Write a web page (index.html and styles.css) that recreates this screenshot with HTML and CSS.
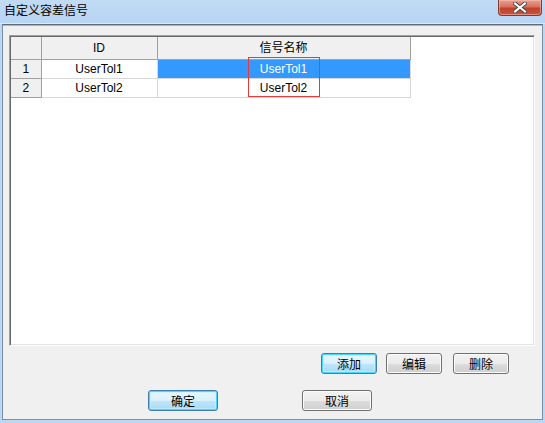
FILE: index.html
```html
<!DOCTYPE html>
<html lang="zh">
<head>
<meta charset="utf-8">
<title>自定义容差信号</title>
<link rel="stylesheet" href="styles.css">
</head>
<body>
<div class="window">
  <div class="titlebar">
    <span class="title">自定义容差信号</span>
    <div class="close">
      <svg width="14" height="11" viewBox="0 0 14 11">
        <path d="M2 1.5 L12 9.5 M12 1.5 L2 9.5" stroke="#4a4a4a" stroke-width="4" stroke-linecap="square" fill="none"/>
        <path d="M2 1.5 L12 9.5 M12 1.5 L2 9.5" stroke="#ffffff" stroke-width="2" stroke-linecap="square" fill="none"/>
      </svg>
    </div>
  </div>
  <div class="client">
    <div class="grid">
      <table class="table">
        <colgroup>
          <col class="c-num"><col class="c-id"><col class="c-name">
        </colgroup>
        <thead>
          <tr><th class="hdr"></th><th class="hdr">ID</th><th class="hdr">信号名称</th></tr>
        </thead>
        <tbody>
          <tr><td class="rownum">1</td><td class="cell">UserTol1</td><td class="cell selected">UserTol1</td></tr>
          <tr><td class="rownum">2</td><td class="cell">UserTol2</td><td class="cell">UserTol2</td></tr>
        </tbody>
      </table>
      <div class="focus-box"></div>
    </div>
    <div class="actions">
      <button class="btn focused">添加</button>
      <button class="btn">编辑</button>
      <button class="btn last">删除</button>
    </div>
    <div class="footer">
      <button class="btn wide focused">确定</button>
      <button class="btn wide">取消</button>
    </div>
  </div>
</div>
</body>
</html>
```
FILE: styles.css
```css
html, body {
  margin: 0;
  padding: 0;
}
body {
  width: 545px;
  height: 423px;
  overflow: hidden;
  font-family: "Liberation Sans", "Noto Sans CJK SC", sans-serif;
  font-size: 12px;
  color: #000;
}
.window {
  width: 545px;
  height: 423px;
  box-sizing: border-box;
  background: #bcd7f3;
  display: flex;
  flex-direction: column;
  padding: 0 2px 3px 2px;
  position: relative;
}
.titlebar {
  height: 24px;
  flex: none;
  display: flex;
  align-items: flex-start;
  background: linear-gradient(#c2dbf5, #b7d4f3);
  margin: 0 -2px;
  padding-left: 4px;
  border-bottom: 1px solid #dbe9f8;
  box-sizing: border-box;
}
.title {
  font-family: "Noto Sans CJK SC", sans-serif;
  font-size: 12px;
  line-height: 12px;
  margin-top: 4px;
  color: #000;
}
.close {
  margin-left: auto;
  margin-right: 3px;
  width: 44px;
  height: 16px;
  box-sizing: border-box;
  border: 1px solid #7d3a30;
  border-top: none;
  border-radius: 0 0 4px 4px;
  background: linear-gradient(#e8a190 0%, #d8705c 45%, #c0422c 55%, #c9553d 100%);
  box-shadow: inset 0 0 0 1px rgba(255,200,190,0.5);
  display: flex;
  align-items: center;
  justify-content: center;
}
.close svg {
  display: block;
  margin-top: -1px;
}
.client {
  flex: 1;
  background: #f0f0f0;
  border: 1px solid #7b8fa3;
  border-top-color: #5f6d7a;
  display: flex;
  flex-direction: column;
  padding: 10px 7px 0 6px;
  box-shadow: inset 0 1px 0 #a9b5c1;
}
.grid {
  height: 311px;
  flex: none;
  box-sizing: border-box;
  background: #fff;
  border: 1px solid;
  border-color: #a0a0a0 #ffffff #ffffff #a0a0a0;
  box-shadow: inset 1px 1px 0 #696969, inset -1px -1px 0 #e3e3e3;
  padding: 1px;
  position: relative;
}
.table {
  border-collapse: collapse;
  table-layout: fixed;
  width: 399px;
}
.c-num { width: 30px; }
.c-id { width: 116px; }
.c-name { width: 253px; }
.table th, .table td {
  padding: 0;
  text-align: center;
  white-space: nowrap;
  box-sizing: border-box;
  font-weight: normal;
}
.hdr {
  height: 22px;
  background: #f0f0f0;
  border-right: 1px solid #a0a0a0;
  border-bottom: 1px solid #a0a0a0;
  font-family: "Liberation Sans", "Noto Sans CJK SC", sans-serif;
  font-size: 12px;
  line-height: 20px;
  vertical-align: middle;
}
.rownum {
  height: 19px;
  background: #f0f0f0;
  border-right: 1px solid #a0a0a0;
  border-bottom: 1px solid #a0a0a0;
  font-size: 12px;
  line-height: 18px;
}
.cell {
  height: 19px;
  border-right: 1px solid #d8d8d8;
  border-bottom: 1px solid #d8d8d8;
  font-size: 12px;
  line-height: 18px;
}
.selected {
  background: #3399ff;
  color: #fff;
}
.focus-box {
  position: absolute;
  left: 238px;
  top: 21px;
  width: 72px;
  height: 40px;
  box-sizing: border-box;
  border: 1px solid #e8383a;
}
.actions {
  display: flex;
  justify-content: flex-end;
  gap: 9px;
  margin-top: 7px;
  padding-right: 26px;
}
.actions .last {
  margin-left: 2px;
}
.footer {
  display: flex;
  gap: 84px;
  margin-top: 16px;
  padding-left: 139px;
}
.btn {
  width: 56px;
  height: 21px;
  box-sizing: border-box;
  margin: 0;
  padding: 0;
  border: 1px solid #707070;
  border-radius: 3px;
  background: linear-gradient(#f2f2f2 0%, #ebebeb 50%, #dddddd 51%, #cfcfcf 100%);
  box-shadow: inset 0 0 0 1px #fcfcfc;
  font-family: "Noto Sans CJK SC", sans-serif;
  font-size: 12px;
  line-height: 18px;
  color: #000;
}
.btn.wide {
  width: 70px;
}
.btn.focused {
  border-color: #3c7fb1;
  background: linear-gradient(#eaf6fd 0%, #d9f0fc 50%, #bee6fd 51%, #a7d9f5 100%);
  box-shadow: inset 0 0 0 1px #48d5fe, inset 0 0 0 2px rgba(200,240,255,0.6);
}
```
